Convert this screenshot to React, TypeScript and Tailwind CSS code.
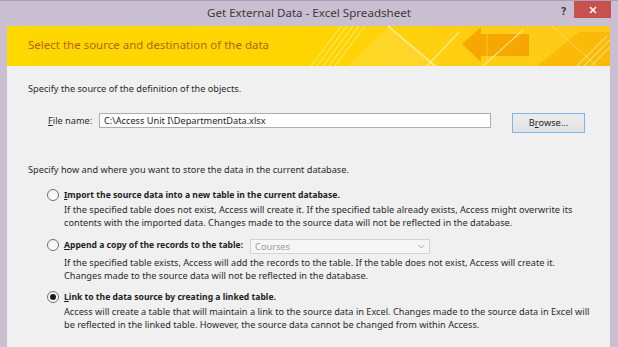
import type { ReactNode } from 'react'

const font = { fontFamily: '"Segoe UI", "Noto Sans", "Open Sans", sans-serif' }

function Radio({ checked }: { checked?: boolean }) {
  return (
    <span className="flex h-[12px] w-[12px] shrink-0 items-center justify-center rounded-full border border-[#707070] bg-gradient-to-b from-[#f2f2f2] to-[#ffffff]">
      {checked && <span className="h-[6px] w-[6px] rounded-full bg-[#1b1b1b]" />}
    </span>
  )
}

function Key({ children }: { children: ReactNode }) {
  return <span className="underline underline-offset-[1px]">{children}</span>
}

function Banner() {
  return (
    <div className="relative h-[40px] shrink-0 overflow-hidden bg-gradient-to-r from-[#ffd800] via-[#ffd500] to-[#ffc81a]">
      <svg className="absolute inset-0" width="603" height="40" viewBox="0 0 603 40">
        <g stroke="#fff6a8" strokeOpacity="0.55" strokeWidth="1.2">
          <line x1="304" y1="40" x2="334" y2="0" />
          <line x1="310" y1="40" x2="340" y2="0" />
          <line x1="316" y1="40" x2="346" y2="0" />
          <line x1="322" y1="40" x2="352" y2="0" />
          <line x1="328" y1="40" x2="358" y2="0" />
        </g>
        <polygon points="340,40 382,0 432,40" fill="#ffffff" fillOpacity="0.12" />
        <line x1="381" y1="0" x2="428" y2="40" stroke="#fff8c0" strokeOpacity="0.8" strokeWidth="1.2" />
        <line x1="420" y1="40" x2="452" y2="6" stroke="#fff8c0" strokeOpacity="0.7" strokeWidth="1.2" />
        <polygon points="455,18 474,1 474,8 522,8 522,30 474,30 474,36" fill="#f5a000" fillOpacity="0.85" />
        <line x1="480" y1="0" x2="480" y2="40" stroke="#ffd24a" strokeOpacity="0.7" strokeWidth="1" />
        <line x1="476" y1="40" x2="516" y2="4" stroke="#fff3a0" strokeOpacity="0.8" strokeWidth="1.2" />
        <polygon points="530,40 572,6 603,6 603,40" fill="#f9b000" fillOpacity="0.65" />
        <g stroke="#ffe27a" strokeOpacity="0.8" strokeWidth="1.2">
          <line x1="570" y1="40" x2="600" y2="10" />
          <line x1="577" y1="40" x2="603" y2="14" />
          <line x1="584" y1="40" x2="603" y2="21" />
        </g>
        <line x1="545" y1="0" x2="590" y2="40" stroke="#fff2a0" strokeOpacity="0.5" strokeWidth="1" />
      </svg>
      <div className="relative pl-[21px] pt-[9px] text-[11.5px] leading-[20px] text-[#b8620f]">
        Select the source and destination of the data
      </div>
    </div>
  )
}

function Option({
  checked,
  label,
  extra,
  lines,
  descGap,
}: {
  checked?: boolean
  label: ReactNode
  extra?: ReactNode
  lines: string[]
  descGap: string
}) {
  return (
    <div className="ml-[19px]">
      <div className="flex h-[14px] items-center">
        <Radio checked={checked} />
        <span className="ml-[5px] text-[8.6px] font-bold leading-[14px] text-[#1e1e1e]">{label}</span>
        {extra}
      </div>
      <div className={`ml-[17px] text-[9.2px] leading-[12.5px] text-[#2a2a2a] ${descGap}`}>
        {lines.map((l) => (
          <div key={l}>{l}</div>
        ))}
      </div>
    </div>
  )
}

export default function App() {
  return (
    <div className="flex h-[347px] w-[618px] flex-col overflow-hidden bg-[#c9bfd1]" style={font}>
      <div className="flex h-[26px] shrink-0 border-t border-[#aaa0b3]">
        <div className="flex-1" />
        <div className="pt-[3px] text-[11.6px] leading-[17px] text-[#3a3a3a]">Get External Data - Excel Spreadsheet</div>
        <div className="flex flex-1 justify-end">
          <span className="mr-[8px] pt-[3px] text-[10px] font-bold leading-[14px] text-[#333]">?</span>
          <div className="mr-[7px] flex h-[17px] w-[37px] items-center justify-center bg-[#c75050]">
            <svg width="8" height="8" viewBox="0 0 8 8">
              <path d="M1 1 L7 7 M7 1 L1 7" stroke="#ffffff" strokeWidth="1.6" />
            </svg>
          </div>
        </div>
      </div>
      <div className="flex flex-1 flex-col pl-[7px] pr-[8px]">
        <Banner />
        <div className="flex-1 bg-[#f0f0f0] pl-[21px] text-[#2a2a2a]">
          <div className="mt-[17px] text-[9.2px] leading-[11px]">Specify the source of the definition of the objects.</div>
          <div className="mt-[19px] flex items-start">
            <span className="ml-[20px] mt-[2px] w-[51px] text-[9.2px] leading-[11px]">
              <Key>F</Key>ile name:
            </span>
            <div className="flex h-[15px] w-[392px] items-center border border-[#abadb3] bg-white pl-[4px] text-[9.2px] text-[#1e1e1e]">
              C:\Access Unit I\DepartmentData.xlsx
            </div>
            <div className="ml-[21px] flex h-[20px] w-[73px] items-center justify-center border border-[#7eb4ea] bg-gradient-to-b from-[#ececec] to-[#e2e2e2] text-[9.2px] text-[#1e1e1e]">
              B<Key>r</Key>owse...
            </div>
          </div>
          <div className="mt-[31px] text-[9.2px] leading-[11px]">
            Specify how and where you want to store the data in the current database.
          </div>
          <div className="mt-[13px]">
            <Option
              label={
                <>
                  <Key>I</Key>mport the source data into a new table in the current database.
                </>
              }
              lines={[
                'If the specified table does not exist, Access will create it. If the specified table already exists, Access might overwrite its',
                'contents with the imported data. Changes made to the source data will not be reflected in the database.',
              ]}
              descGap="mt-[2px]"
            />
          </div>
          <div className="mt-[9px]">
            <Option
              label={
                <>
                  <Key>A</Key>ppend a copy of the records to the table:
                </>
              }
              extra={
                <div className="ml-[7px] mt-[3px] flex h-[15px] w-[180px] items-center justify-between border border-[#d3d3d3] bg-[#f6f6f6] pl-[4px] pr-[4px] text-[9.2px] text-[#9b9b9b]">
                  <span>Courses</span>
                  <svg width="7" height="5" viewBox="0 0 7 5">
                    <path d="M0.5 0.8 L3.5 4 L6.5 0.8" stroke="#a8a8a8" strokeWidth="1" fill="none" />
                  </svg>
                </div>
              }
              lines={[
                'If the specified table exists, Access will add the records to the table. If the table does not exist, Access will create it.',
                'Changes made to the source data will not be reflected in the database.',
              ]}
              descGap="mt-[5px]"
            />
          </div>
          <div className="mt-[8px]">
            <Option
              checked
              label={
                <>
                  <Key>L</Key>ink to the data source by creating a linked table.
                </>
              }
              lines={[
                'Access will create a table that will maintain a link to the source data in Excel. Changes made to the source data in Excel will',
                'be reflected in the linked table. However, the source data cannot be changed from within Access.',
              ]}
              descGap="mt-[2px]"
            />
          </div>
        </div>
      </div>
    </div>
  )
}
